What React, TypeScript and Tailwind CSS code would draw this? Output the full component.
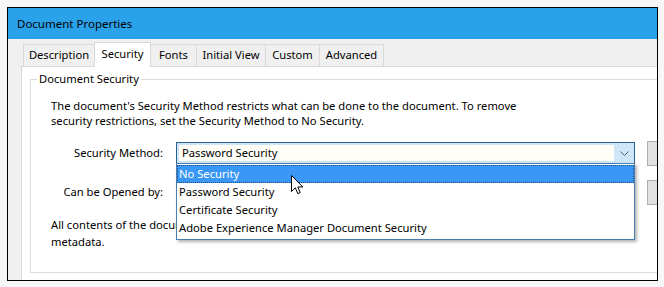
const tabs = [
  { label: "Description", w: "w-[72px]" },
  { label: "Security", w: "w-[57px]", active: true },
  { label: "Fonts", w: "w-[47px]" },
  { label: "Initial View", w: "w-[70px]" },
  { label: "Custom", w: "w-[55px]" },
  { label: "Advanced", w: "w-[65px]" },
];

const options = [
  "No Security",
  "Password Security",
  "Certificate Security",
  "Adobe Experience Manager Document Security",
];

function Chevron() {
  return (
    <svg width="9" height="5" viewBox="0 0 9 5" className="block">
      <path d="M0.5 0.5 L4.5 4.5 L8.5 0.5" fill="none" stroke="#5a5a5a" strokeWidth="1" />
    </svg>
  );
}

function Cursor() {
  return (
    <svg width="13" height="20" viewBox="0 0 13 20" className="block">
      <path
        d="M0.5 0.5 L0.5 16.5 L4.3 12.8 L6.8 18.6 L9.2 17.6 L6.8 12 L11.8 12 Z"
        fill="#ffffff"
        stroke="#000000"
        strokeWidth="1"
        strokeLinejoin="miter"
      />
    </svg>
  );
}

function GrayButton() {
  return <div className="h-[25px] w-[90px] shrink-0 border border-[#adadad] bg-[#e1e1e1]" />;
}

export default function App() {
  return (
    <div className="relative h-[287px] w-[664px] overflow-hidden bg-[#f7f7f7] pl-[7px] pt-[7px] font-['Noto_Sans',sans-serif] text-[11.2px] text-black">
      <div className="flex h-[274px] w-[651px] flex-col overflow-hidden border border-black">
        {/* title bar */}
        <div className="flex h-[31px] shrink-0 items-center bg-[#2aa2ea] pl-[9px] text-[11.5px]">
          Document Properties
        </div>

        {/* body */}
        <div className="flex min-h-0 flex-1 flex-col bg-[#f0f0f0] pl-[13px] pt-[3px]">
          <div className="flex h-[24px] shrink-0 items-end pl-[2px]">
            {tabs.map((t, i) =>
              t.active ? (
                <div
                  key={t.label}
                  className={`relative z-10 -ml-px mb-[-1px] flex h-[25px] ${t.w} items-start justify-center border-x border-t border-[#d9d9d9] bg-white pt-[3px]`}
                >
                  {t.label}
                </div>
              ) : (
                <div
                  key={t.label}
                  className={`${i > 0 ? "-ml-px" : ""} flex h-[22px] ${t.w} items-center justify-center border-x border-t border-[#d9d9d9] bg-[#f0f0f0] pb-[1px]`}
                >
                  {t.label}
                </div>
              )
            )}
          </div>

          {/* tab panel */}
          <div className="min-h-0 flex-1 border-l border-t border-[#d9d9d9] bg-white pl-[8px] pt-[12px]">
            <div className="relative h-[194px] w-[720px] border border-[#dcdcdc] pl-[20px] pt-[18px]">
              <span className="absolute left-[6px] top-[-9px] bg-white px-[2px] leading-[16px]">
                Document Security
              </span>

              <p className="whitespace-nowrap leading-[15px]">
                The document's Security Method restricts what can be done to the document. To remove
                <br />
                security restrictions, set the Security Method to No Security.
              </p>

              <div className="mt-[12px] flex flex-col gap-[14px]">
                <div className="flex h-[26px] items-center">
                  <div className="w-[112px] text-right">Security Method:</div>
                  <div className="relative z-20 ml-[13px] flex h-[22px] w-[459px] items-stretch border border-[#2b6394] bg-[#cfe6f8] p-[2px] pr-0">
                    <div className="flex flex-1 items-center bg-[#fffff8] pl-[3px]">Password Security</div>
                    <div className="flex w-[20px] items-center justify-center">
                      <Chevron />
                    </div>

                    {/* open list */}
                    <div className="absolute left-[-1px] top-[20px] w-[459px] border border-[#4a7db0] bg-white py-[1px] pb-[2px] shadow-[2px_2px_3px_rgba(0,0,0,0.3)]">
                      {options.map((o, i) => (
                        <div
                          key={o}
                          className={
                            i === 0
                              ? "flex h-[18px] items-center border border-dotted border-[#1b4f80] bg-[#3a97f5] pl-[1px] text-white"
                              : "flex h-[18px] items-center pl-[2px]"
                          }
                        >
                          {o}
                        </div>
                      ))}
                    </div>
                  </div>
                  <div className="ml-[12px]">
                    <GrayButton />
                  </div>
                </div>

                <div className="flex h-[25px] items-center">
                  <div className="w-[112px] text-right">Can be Opened by:</div>
                  <div className="ml-[13px] h-[22px] w-[459px] border border-[#adadad] bg-[#e5e5e5]" />
                  <div className="ml-[12px]">
                    <GrayButton />
                  </div>
                </div>
              </div>

              <p className="mt-[11px] whitespace-nowrap leading-[17px]">
                All contents of the document are encrypted and search engines cannot access the document's
                <br />
                metadata.
              </p>
            </div>
          </div>
        </div>
      </div>

      <div className="absolute left-[291px] top-[175px] z-30">
        <Cursor />
      </div>
    </div>
  );
}
